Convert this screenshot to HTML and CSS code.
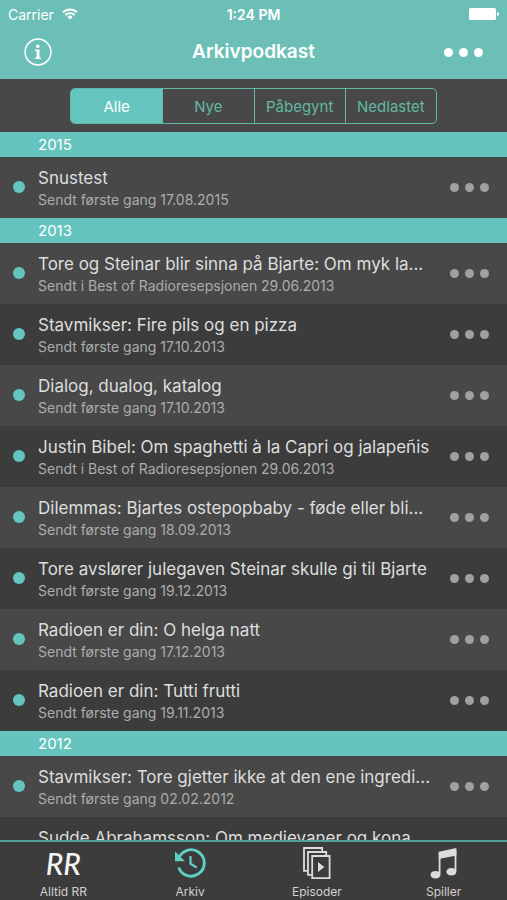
FILE: index.html
```html
<!DOCTYPE html>
<html lang="no">
<head>
<meta charset="utf-8">
<meta name="viewport" content="width=device-width, initial-scale=1">
<title>Arkivpodkast</title>
<link rel="stylesheet" href="styles.css">
</head>
<body>
<div class="app">
  <header class="top">
    <div class="status">
      <div class="carrier">Carrier
        <svg class="wifi" viewBox="0 0 16 12" aria-hidden="true"><path d="M1 4.4a10 10 0 0 1 14 0M3.4 7a6.6 6.6 0 0 1 9.2 0" fill="none" stroke="#fff" stroke-width="1.9"/><path d="M5.3 8.8a3.9 3.9 0 0 1 5.4 0L8 11.6z" fill="#fff"/></svg>
      </div>
      <div class="clock">1:24 PM</div>
      <div class="power">
        <svg class="battery" viewBox="0 0 30 12" aria-hidden="true"><rect width="27" height="12" rx="1.5" fill="#fff"/><path d="M28 4a2 2 0 0 1 0 4z" fill="#fff"/></svg>
      </div>
    </div>
    <div class="nav">
      <button class="info" type="button" aria-label="Info">
        <svg viewBox="0 0 28 28" aria-hidden="true"><circle cx="14" cy="14" r="12.9" fill="none" stroke="#fff" stroke-width="1.5"/><circle cx="13.8" cy="8.3" r="1.8" fill="#fff"/><path d="M11 11.6h4.5v8.2h1.7v1.3h-6.3v-1.3h1.7v-6.9H11z" fill="#fff"/></svg>
      </button>
      <h1>Arkivpodkast</h1>
      <button class="more" type="button" aria-label="Mer"><i></i><i></i><i></i></button>
    </div>
  </header>
  <div class="filter">
    <div class="segments">
      <button class="on" type="button">Alle</button>
      <button type="button">Nye</button>
      <button type="button">Påbegynt</button>
      <button type="button">Nedlastet</button>
    </div>
  </div>
  <main class="list">
    <h2>2015</h2>
    <ul>
      <li><span class="dot"></span><div class="text"><h3>Snustest</h3><p>Sendt første gang 17.08.2015</p></div><button class="more" type="button" aria-label="Mer"><i></i><i></i><i></i></button></li>
    </ul>
    <h2>2013</h2>
    <ul>
      <li><span class="dot"></span><div class="text"><h3>Tore og Steinar blir sinna på Bjarte: Om myk la...</h3><p>Sendt i Best of Radioresepsjonen 29.06.2013</p></div><button class="more" type="button" aria-label="Mer"><i></i><i></i><i></i></button></li>
      <li><span class="dot"></span><div class="text"><h3>Stavmikser: Fire pils og en pizza</h3><p>Sendt første gang 17.10.2013</p></div><button class="more" type="button" aria-label="Mer"><i></i><i></i><i></i></button></li>
      <li><span class="dot"></span><div class="text"><h3>Dialog, dualog, katalog</h3><p>Sendt første gang 17.10.2013</p></div><button class="more" type="button" aria-label="Mer"><i></i><i></i><i></i></button></li>
      <li><span class="dot"></span><div class="text"><h3>Justin Bibel: Om spaghetti à la Capri og jalapeñis</h3><p>Sendt i Best of Radioresepsjonen 29.06.2013</p></div><button class="more" type="button" aria-label="Mer"><i></i><i></i><i></i></button></li>
      <li><span class="dot"></span><div class="text"><h3>Dilemmas: Bjartes ostepopbaby - føde eller bli...</h3><p>Sendt første gang 18.09.2013</p></div><button class="more" type="button" aria-label="Mer"><i></i><i></i><i></i></button></li>
      <li><span class="dot"></span><div class="text"><h3>Tore avslører julegaven Steinar skulle gi til Bjarte</h3><p>Sendt første gang 19.12.2013</p></div><button class="more" type="button" aria-label="Mer"><i></i><i></i><i></i></button></li>
      <li><span class="dot"></span><div class="text"><h3>Radioen er din: O helga natt</h3><p>Sendt første gang 17.12.2013</p></div><button class="more" type="button" aria-label="Mer"><i></i><i></i><i></i></button></li>
      <li><span class="dot"></span><div class="text"><h3>Radioen er din: Tutti frutti</h3><p>Sendt første gang 19.11.2013</p></div><button class="more" type="button" aria-label="Mer"><i></i><i></i><i></i></button></li>
    </ul>
    <h2>2012</h2>
    <ul>
      <li><span class="dot"></span><div class="text"><h3>Stavmikser: Tore gjetter ikke at den ene ingredi...</h3><p>Sendt første gang 02.02.2012</p></div><button class="more" type="button" aria-label="Mer"><i></i><i></i><i></i></button></li>
      <li><span class="dot"></span><div class="text"><h3>Sudde Abrahamsson: Om medievaner og kona</h3></div></li>
    </ul>
  </main>
  <nav class="tabs">
    <a href="#alltid"><span class="icon logo">RR</span>Alltid RR</a>
    <a href="#arkiv"><span class="icon"><svg viewBox="0 0 32 32" aria-hidden="true"><path d="M4.6 11.6A13.2 13.2 0 1 1 4.7 20.5" fill="none" stroke="#5fcfc3" stroke-width="2.9"/><path d="M1 4.3V14.3H11z" fill="#5fcfc3"/><path d="M16.5 9v7.8l6.3 3.6" fill="none" stroke="#5fcfc3" stroke-width="2.3"/></svg></span>Arkiv</a>
    <a href="#episoder"><span class="icon"><svg viewBox="0 0 32 32" aria-hidden="true"><g fill="none" stroke="#dcdcdc" stroke-width="1.8"><path d="M6.6 23.9H3V1h18.2v3.6"/><path d="M10.8 27.8H7V5h18.2v3.8"/><path d="M11.2 9h17.4v22.2H11.2z"/></g><path d="M17 15v10l6.3-5z" fill="#dcdcdc"/></svg></span>Episoder</a>
    <a href="#spiller"><span class="icon"><svg viewBox="0 0 32 32" aria-hidden="true"><path d="M10.8 4.8 28.4 1v7.4L10.8 12z" fill="#dcdcdc"/><path d="M11.6 5v22M27.5 3v21" stroke="#dcdcdc" stroke-width="1.8"/><ellipse cx="7.5" cy="27.8" rx="5" ry="3.8" fill="#dcdcdc"/><ellipse cx="23.4" cy="24.7" rx="5" ry="3.8" fill="#dcdcdc"/></svg></span>Spiller</a>
  </nav>
</div>
</body>
</html>
```
FILE: styles.css
```css
* {
  box-sizing: border-box;
}

body,
h1,
h2,
h3,
p,
ul {
  margin: 0;
  padding: 0;
}

body {
  background: #484848;
  font-family: Inter, "Liberation Sans", sans-serif;
}

button {
  border: 0;
  padding: 0;
  background: none;
  font: inherit;
}

svg {
  display: block;
}

.app {
  display: flex;
  flex-direction: column;
  height: 100vh;
}

.top {
  background: #6cbfb7;
  color: #fff;
}

.status {
  display: grid;
  grid-template-columns: 1fr auto 1fr;
  align-items: center;
  height: 28px;
  padding: 0 8px;
  font-size: 14px;
}

.carrier {
  display: flex;
  align-items: center;
  gap: 8px;
}

.wifi {
  width: 16px;
  height: 12px;
}

.clock {
  font-weight: 600;
}

.power {
  display: flex;
  justify-content: flex-end;
}

.battery {
  width: 30px;
  height: 12px;
}

.nav {
  display: grid;
  grid-template-columns: 1fr auto 1fr;
  align-items: center;
  height: 51px;
  padding: 0 24px 3px;
}

.info svg {
  width: 28px;
  height: 28px;
}

h1 {
  font-size: 19px;
  font-weight: 600;
  line-height: 24px;
}

.more {
  display: flex;
  gap: 6px;
  justify-self: end;
}

.more i {
  width: 9px;
  height: 9px;
  border-radius: 50%;
  background: #a0a0a0;
}

.nav .more i {
  background: #fff;
}

.filter {
  padding: 9px 70px 8px;
}

.segments {
  display: grid;
  grid-template-columns: repeat(4, 1fr);
  height: 36px;
  overflow: hidden;
  border: 1px solid #62b8a8;
  border-radius: 5px;
}

.segments button {
  color: #62b8a0;
  font-size: 15px;
}

.segments button + button {
  border-left: 1px solid #62b8a8;
}

.segments .on {
  background: #66c5bf;
  color: #fff;
}

.list {
  flex: 1;
  min-height: 0;
  overflow: hidden;
}

h2 {
  padding-left: 38px;
  background: #65c4be;
  color: #fff;
  font-size: 15px;
  font-weight: 400;
  line-height: 25px;
}

ul {
  list-style: none;
}

li {
  display: flex;
  align-items: center;
  height: 61px;
  padding: 0 18px 0 13px;
  background: #484848;
}

li:nth-child(even) {
  background: #3c3c3c;
}

.dot {
  width: 12px;
  height: 12px;
  margin-bottom: 2px;
  border-radius: 50%;
  background: #65c4be;
}

.text {
  flex: 1;
  min-width: 0;
  height: 42px;
  padding-left: 13px;
  white-space: nowrap;
}

h3 {
  color: #dedede;
  font-size: 17px;
  font-weight: 400;
  line-height: 23px;
}

p {
  color: #acacac;
  font-size: 14px;
  line-height: 20px;
}

.tabs {
  display: grid;
  grid-template-columns: repeat(4, 1fr);
  height: 60px;
  border-top: 2px solid #559f9b;
  background: #3c3c3c;
}

.tabs a {
  display: flex;
  flex-direction: column;
  align-items: center;
  padding-top: 5px;
  color: #d2d2d2;
  font-size: 12px;
  line-height: 16px;
  text-decoration: none;
}

.icon {
  height: 37px;
}

.icon svg {
  width: 32px;
  height: 32px;
}

.logo {
  color: #f4f4f4;
  font-family: Lato, "Open Sans", sans-serif;
  font-size: 30px;
  font-style: italic;
  font-weight: 500;
  line-height: 32px;
}
```
